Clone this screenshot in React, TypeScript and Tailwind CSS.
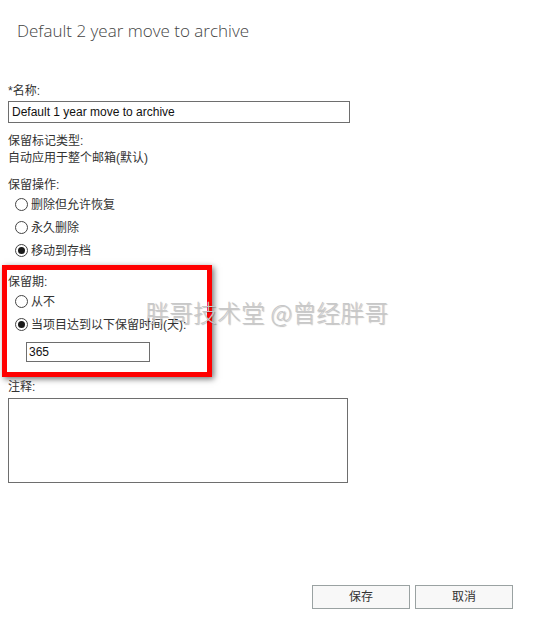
import React from 'react';

const font = { fontFamily: '"Segoe UI", "Liberation Sans", "Noto Sans CJK SC", sans-serif' };

function Radio({ label, checked }: { label: string; checked?: boolean }) {
  return (
    <div className="flex items-center h-[23px] pl-[15px]">
      <span className="w-[13px] h-[13px] rounded-full border border-[#444] bg-white flex items-center justify-center">
        {checked && <span className="w-[7px] h-[7px] rounded-full bg-[#1a1a1a]" />}
      </span>
      <span className="ml-[3px] text-[12px] text-[#333]">{label}</span>
    </div>
  );
}

export default function App() {
  return (
    <div
      className="relative w-[542px] h-[631px] bg-white overflow-hidden"
      style={font}
    >
      <h1 className="pt-[19px] pl-[17px] text-[17px] leading-[24px] font-light text-[#444] [font-family:'Open_Sans','Liberation_Sans',sans-serif]">
        Default 2 year move to archive
      </h1>

      <div className="pl-[8px]">
        <div className="mt-[40px] text-[12px] leading-[16px] text-[#333]">*名称:</div>
        <input
          readOnly
          value="Default 1 year move to archive"
          className="mt-[2px] block w-[342px] h-[22px] border border-[#6e6e6e] px-[3px] text-[12px] text-[#111] outline-none"
        />

        <div className="mt-[10px] text-[12px] leading-[16px] text-[#333]">保留标记类型:</div>
        <div className="mt-[1px] text-[12px] leading-[16px] text-[#333]">自动应用于整个邮箱(默认)</div>

        <div className="mt-[11px] text-[12px] leading-[16px] text-[#333]">保留操作:</div>
        <div className="-ml-[8px]">
          <Radio label="删除但允许恢复" />
          <Radio label="永久删除" />
          <Radio label="移动到存档" checked />
        </div>

        <div className="mt-[12px] text-[12px] leading-[16px] text-[#333]">保留期:</div>
        <div className="-ml-[8px]">
          <Radio label="从不" />
          <Radio label="当项目达到以下保留时间(天):" checked />
        </div>
        <input
          readOnly
          value="365"
          className="mt-[6px] ml-[18px] block w-[124px] h-[20px] border border-[#6e6e6e] px-[2px] text-[12px] text-[#111] outline-none"
        />

        <div className="mt-[17px] text-[12px] leading-[16px] text-[#333]">注释:</div>
        <textarea
          readOnly
          className="mt-[3px] block w-[340px] h-[85px] border border-[#6e6e6e] resize-none outline-none"
        />
      </div>

      <div className="mt-[102px] flex justify-end gap-[5px] pr-[29px]">
        <button className="w-[98px] h-[24px] bg-[#f8f8f8] border border-[#9aa2a2] text-[12px] text-[#333]">保存</button>
        <button className="w-[98px] h-[24px] bg-[#f8f8f8] border border-[#9aa2a2] text-[12px] text-[#333]">取消</button>
      </div>

      {/* red annotation box */}
      <div className="absolute left-[2px] top-[265px] w-[210px] h-[112px] border-[5px] border-[#ff0000] shadow-[2px_2px_6px_rgba(0,0,0,0.55)] pointer-events-none" />

      {/* watermark */}
      <div className="absolute left-[145px] top-[296px] text-[24px] leading-[32px] font-light text-[#c8c8c8] [text-shadow:1px_1px_1px_rgba(0,0,0,0.25)] whitespace-nowrap pointer-events-none [font-family:'Noto_Sans_CJK_SC',sans-serif]">
        胖哥技术堂 @曾经胖哥
      </div>
    </div>
  );
}
